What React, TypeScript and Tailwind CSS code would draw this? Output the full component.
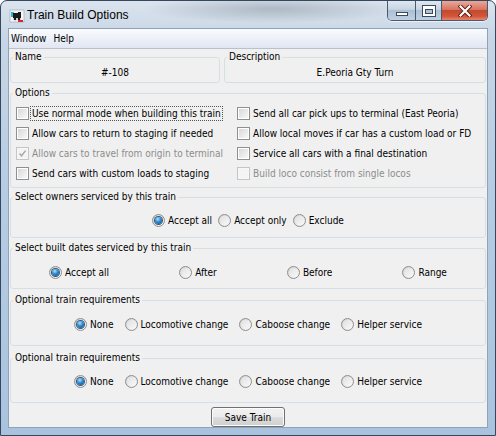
import React from 'react';

const Check = ({ checked = false, disabled = false }: { checked?: boolean; disabled?: boolean }) => (
  <span
    className={`w-[13px] h-[13px] shrink-0 flex p-[1px] border ${
      disabled ? 'border-[#c5c5c5] bg-[#f7f7f7]' : 'border-[#8e8f8f] bg-white'
    }`}
  >
    <span
      className={`flex-1 flex items-center justify-center ${
        disabled ? 'bg-[#f4f4f4]' : 'bg-[linear-gradient(135deg,#d8d8d8,#f9f9f9)]'
      }`}
    >
      {checked && (
        <svg width="9" height="9" viewBox="0 0 9 9">
          <path d="M1.5 4.5 L3.5 6.8 L7.6 1.6" fill="none" stroke={disabled ? '#a8a8a8' : '#4a5f97'} strokeWidth="1.4" />
        </svg>
      )}
    </span>
  </span>
);

const Radio = ({ checked = false }: { checked?: boolean }) => (
  <span className="w-[13px] h-[13px] shrink-0 rounded-full border border-[#8e8f8f] bg-[linear-gradient(135deg,#cfcfcf,#fbfbfb)] flex items-center justify-center">
    {checked ? (
      <span className="w-[7px] h-[7px] rounded-full bg-[radial-gradient(circle_at_40%_30%,#a8e6ff_0%,#2e8ad4_45%,#0c3c74_100%)] shadow-[0_0_0_1px_#3a5673]" />
    ) : (
      <span className="w-[9px] h-[9px] rounded-full bg-[linear-gradient(135deg,#e0e0e0,#f9f9f9)]" />
    )}
  </span>
);

const CheckItem = ({
  label,
  checked,
  disabled,
  focused,
}: {
  label: string;
  checked?: boolean;
  disabled?: boolean;
  focused?: boolean;
}) => (
  <div className="h-[20px] flex items-center gap-[1px]">
    <Check checked={checked} disabled={disabled} />
    <span
      className={`px-[1px] leading-[13px] border whitespace-nowrap ${
        focused ? 'border-dotted border-[#555]' : 'border-transparent'
      } ${disabled ? 'text-[#8d8d8d]' : 'text-black'}`}
    >
      {label}
    </span>
  </div>
);

const RadioItem = ({ label, checked }: { label: string; checked?: boolean }) => (
  <div className="h-[20px] flex items-center gap-[3px] whitespace-nowrap">
    <Radio checked={checked} />
    <span className="leading-[13px]">{label}</span>
  </div>
);

const Group = ({
  title,
  className,
  children,
}: {
  title: string;
  className: string;
  children: React.ReactNode;
}) => (
  <fieldset className={`min-w-0 border border-[#d5dfe5] rounded-[3px] px-[2px] ${className}`}>
    <legend className="px-[2px] leading-[12px]">{title}</legend>
    {children}
  </fieldset>
);

const TrainIcon = () => (
  <svg width="16" height="16" viewBox="0 0 16 16" className="mt-[7px] shrink-0">
    <rect x="1" y="2" width="14" height="12" fill="#f4f4f4" stroke="#9aa4ae" strokeWidth="0.6" />
    <rect x="2" y="4" width="3" height="5" fill="#29b6d6" />
    <path d="M4 5 H9 V4 H12 V10 H4 Z" fill="#1b1b1b" />
    <circle cx="6" cy="11" r="1.3" fill="#1b1b1b" />
    <circle cx="10" cy="11" r="1.3" fill="#1b1b1b" />
    <rect x="9" y="12" width="5" height="2" fill="#d8262c" />
  </svg>
);

const CaptionButtons = () => (
  <div className="ml-auto mr-[7px] flex h-[20px] rounded-b-[5px] border border-t-0 border-[#4a5a6e] overflow-hidden shadow-[0_1px_0_rgba(255,255,255,0.6)]">
    <div className="w-[28px] flex items-center justify-center bg-[linear-gradient(180deg,#dfe8f1_0%,#c6d4e2_45%,#aebfd2_50%,#bfd0e2_100%)] border-r border-[#4a5a6e]">
      <span className="mt-[6px] w-[12px] h-[4px] bg-white border border-[#3b4b5e]" />
    </div>
    <div className="w-[26px] flex items-center justify-center bg-[linear-gradient(180deg,#dfe8f1_0%,#c6d4e2_45%,#aebfd2_50%,#bfd0e2_100%)] border-r border-[#4a5a6e]">
      <span className="w-[12px] h-[10px] border-[2px] border-t-[3px] border-white shadow-[0_0_0_1px_#3b4b5e,inset_0_0_0_1px_#3b4b5e]" />
    </div>
    <div className="w-[45px] flex items-center justify-center bg-[linear-gradient(180deg,#e9a99c_0%,#d7755f_45%,#c24a2f_50%,#d3553a_80%,#e5866a_100%)]">
      <svg width="14" height="12" viewBox="0 0 14 12">
        <path d="M2.5 1.5 L11.5 10.5 M11.5 1.5 L2.5 10.5" stroke="#5a1a10" strokeWidth="4" strokeLinecap="square" />
        <path d="M2.5 1.5 L11.5 10.5 M11.5 1.5 L2.5 10.5" stroke="#ffffff" strokeWidth="2.2" strokeLinecap="square" />
      </svg>
    </div>
  </div>
);

export default function App() {
  return (
    <div className="w-[496px] h-[436px] flex flex-col overflow-hidden rounded-t-[7px] border border-[#33475e] bg-[radial-gradient(ellipse_130px_14px_at_55%_8px,rgba(80,92,108,0.3),transparent),linear-gradient(180deg,#dbe4ee_0%,#c8d6e5_8%,#b8cde3_40%,#a9c3df_100%)] font-['DejaVu_Sans_Condensed','DejaVu_Sans',sans-serif] text-[10px] text-black">
      <div className="h-[27px] shrink-0 flex items-start pl-[8px]">
        <TrainIcon />
        <span className="ml-[2px] mt-[7px] font-['Liberation_Sans',Arial,sans-serif] text-[12px] leading-[14px] text-black">
          Train Build Options
        </span>
        <CaptionButtons />
      </div>

      <div className="flex-1 mx-[7px] mb-[7px] border border-[#8ea2b8] bg-[#f0f0f0] flex flex-col">
        <div className="h-[20px] shrink-0 flex items-center gap-[7px] px-[2px] border-b border-[#b9c1cc] bg-[linear-gradient(180deg,#fafbfe,#e1e6f2)]">
          <span>Window</span>
          <span>Help</span>
        </div>

        <div className="mx-[1px] mt-[2px] flex gap-[4px]">
          <Group title="Name" className="w-[210px] shrink-0 pt-[3px] pb-[2px]">
            <div className="text-center leading-[14px]">#-108</div>
          </Group>
          <Group title="Description" className="flex-1 pt-[3px] pb-[2px]">
            <div className="text-center leading-[14px]">E.Peoria Gty Turn</div>
          </Group>
        </div>

        <Group title="Options" className="mx-[1px] mt-[4px] pt-[4px] pb-[4px]">
          <div className="ml-[3px] grid grid-cols-[221px_1fr]">
            <CheckItem label="Use normal mode when building this train" focused />
            <CheckItem label="Send all car pick ups to terminal (East Peoria)" />
            <CheckItem label="Allow cars to return to staging if needed" />
            <CheckItem label="Allow local moves if car has a custom load or FD" />
            <CheckItem label="Allow cars to travel from origin to terminal" checked disabled />
            <CheckItem label="Service all cars with a final destination" />
            <CheckItem label="Send cars with custom loads to staging" />
            <CheckItem label="Build loco consist from single locos" disabled />
          </div>
        </Group>

        <Group title="Select owners serviced by this train" className="mx-[1px] mt-[3px] pt-[7px] pb-[7px]">
          <div className="flex justify-center gap-[6px]">
            <RadioItem label="Accept all" checked />
            <RadioItem label="Accept only" />
            <RadioItem label="Exclude" />
          </div>
        </Group>

        <Group title="Select built dates serviced by this train" className="mx-[1px] mt-[4px] pt-[8px] pb-[6px]">
          <div className="flex justify-around px-[1px]">
            <RadioItem label="Accept all" checked />
            <RadioItem label="After" />
            <RadioItem label="Before" />
            <RadioItem label="Range" />
          </div>
        </Group>

        <Group title="Optional train requirements" className="mx-[1px] mt-[5px] pt-[8px] pb-[11px]">
          <div className="flex justify-center gap-[11px]">
            <RadioItem label="None" checked />
            <RadioItem label="Locomotive change" />
            <RadioItem label="Caboose change" />
            <RadioItem label="Helper service" />
          </div>
        </Group>

        <Group title="Optional train requirements" className="mx-[1px] mt-[6px] pt-[7px] pb-[11px]">
          <div className="flex justify-center gap-[11px]">
            <RadioItem label="None" checked />
            <RadioItem label="Locomotive change" />
            <RadioItem label="Caboose change" />
            <RadioItem label="Helper service" />
          </div>
        </Group>

        <div className="mt-[4px] flex justify-center">
          <button className="w-[74px] h-[20px] rounded-[3px] border border-[#707070] bg-[linear-gradient(180deg,#f2f2f2_0%,#ebebeb_49%,#dddddd_50%,#cfcfcf_100%)] shadow-[inset_0_0_0_1px_#fcfcfc] leading-[13px] text-black">
            Save Train
          </button>
        </div>
      </div>
    </div>
  );
}
